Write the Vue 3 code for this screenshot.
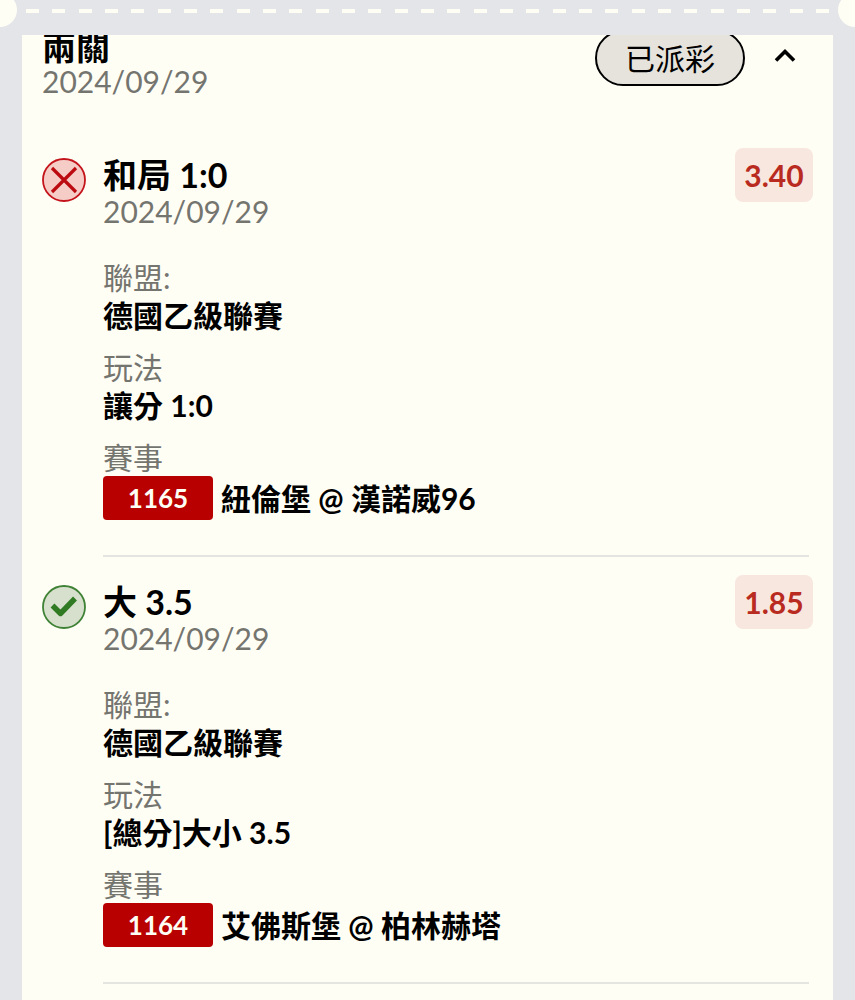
<script setup>
import { ref } from 'vue'

const open = ref(true)

const bets = [
    {
        id: 1165,
        won: false,
        pick: '和局 1:0',
        date: '2024/09/29',
        odds: '3.40',
        league: '德國乙級聯賽',
        play: '讓分 1:0',
        match: '紐倫堡 @ 漢諾威96',
    },
    {
        id: 1164,
        won: true,
        pick: '大 3.5',
        date: '2024/09/29',
        odds: '1.85',
        league: '德國乙級聯賽',
        play: '[總分]大小 3.5',
        match: '艾佛斯堡 @ 柏林赫塔',
    },
]
</script>

<template>
    <div class="page">
        <div class="tearLine">
            <span class="notch"></span>
            <div class="dashes">
                <span v-for="n in 31" :key="n" class="dash"></span>
            </div>
            <span class="notch"></span>
        </div>

        <main class="card">
            <header class="cardHeader">
                <div class="heading">
                    <h1>兩關</h1>
                    <p class="date">2024/09/29</p>
                </div>
                <span class="status">已派彩</span>
                <button class="toggle" aria-label="收合" :aria-expanded="open" v-on:click="open = !open">
                    <svg viewBox="0 0 24 16" width="24" height="16">
                        <path d="M3 12.5 L12 3.5 L21 12.5" fill="none" stroke="#000" stroke-width="3.6" />
                    </svg>
                </button>
            </header>

            <div v-if="open">
                <section v-for="bet in bets" :key="bet.id" class="bet">
                    <svg v-if="bet.won" class="result" viewBox="0 0 44 44">
                        <circle cx="22" cy="22" r="21" fill="#d6e0cc" stroke="#3f8235" stroke-width="1.8" />
                        <path d="M10.5 20.5 L18.5 28.5 L33 13.5" fill="none" stroke="#2f7a22" stroke-width="5.4" stroke-linejoin="round" />
                    </svg>
                    <svg v-else class="result" viewBox="0 0 44 44">
                        <circle cx="22" cy="22" r="21" fill="#f5cdc6" stroke="#c4141c" stroke-width="1.8" />
                        <path d="M10 10 L34 34 M34 10 L10 34" fill="none" stroke="#bb0a10" stroke-width="3.2" />
                    </svg>

                    <div class="betBody">
                        <h2>{{ bet.pick }}</h2>
                        <p class="date">{{ bet.date }}</p>
                        <dl>
                            <div>
                                <dt>聯盟:</dt>
                                <dd>{{ bet.league }}</dd>
                            </div>
                            <div>
                                <dt>玩法</dt>
                                <dd>{{ bet.play }}</dd>
                            </div>
                            <div>
                                <dt>賽事</dt>
                                <dd class="match">
                                    <span class="matchId">{{ bet.id }}</span>
                                    <span>{{ bet.match }}</span>
                                </dd>
                            </div>
                        </dl>
                    </div>

                    <span class="odds">{{ bet.odds }}</span>
                    <hr>
                </section>
            </div>
        </main>
    </div>
</template>

<style>
body {
    background-color: #e4e5e8;
}
</style>

<style scoped>
.page {
    height: 100vh;
    overflow: hidden;

    display: flex;
    flex-direction: column;

    background-color: #e4e5e8;
    color: #000;

    font-family: Lato, "Noto Sans CJK TC", sans-serif;
    font-size: 30px;
    line-height: 38px;
}

h1,
h2,
p,
dl,
dd {
    margin: 0;
}

.tearLine {
    flex: none;
    height: 42px;
    margin: -7px -17px 0;

    display: flex;
    align-items: flex-start;
}

.notch {
    flex: none;
    width: 34px;
    height: 34px;

    background-color: #fffef5;
    border-radius: 50%;
}

.dashes {
    flex: 1;
    height: 36px;
    padding: 0 9px;

    display: flex;
    align-items: center;
    justify-content: space-between;
}

.dash {
    width: 13px;
    height: 4px;
    background-color: #fffef5;
}

.card {
    flex: 1;
    min-height: 0;
    margin: 0 22px;
    padding: 0 20px;
    overflow: hidden;
    background-color: #fffef5;
}

/* scrolled slightly under the tear line */
.cardHeader {
    height: 100px;
    margin-top: -5px;

    display: flex;
    align-items: flex-start;
}

.heading {
    flex: 1;
}

h1 {
    font-size: 34px;
    line-height: 34px;
    font-weight: 700;
}

.date {
    color: #757570;
    line-height: 34px;
}

.status {
    box-sizing: border-box;
    height: 56px;
    padding: 0 28px;

    background-color: #e5e3db;
    border: 2px solid #000;
    border-radius: 28px;

    line-height: 52px;
}

.toggle {
    width: 56px;
    height: 52px;
    margin: 0 0 0 12px;
    padding: 0;

    display: flex;
    align-items: center;
    justify-content: center;

    background: none;
    border: none;
    cursor: pointer;
}

.bet {
    padding-top: 18px;

    display: grid;
    grid-template-columns: 44px 1fr auto;
    column-gap: 17px;
    align-items: start;
}

.result {
    width: 44px;
    height: 44px;
    margin-top: 10px;
}

.betBody {
    padding: 8px 0 35px;
}

h2 {
    font-size: 34px;
    line-height: 38px;
    font-weight: 700;
}

dl {
    margin-top: 30px;

    display: flex;
    flex-direction: column;
    gap: 14px;
}

dt {
    color: #757570;
}

dd {
    font-weight: 700;
}

.match {
    display: flex;
    align-items: center;
    gap: 8px;
}

.matchId {
    width: 110px;

    background-color: #b80000;
    color: #fffef5;
    border-radius: 4px;

    font-size: 26px;
    line-height: 44px;
    text-align: center;
}

.odds {
    width: 78px;

    background-color: #f8e7df;
    color: #b92b20;
    border-radius: 8px;

    font-weight: 700;
    line-height: 54px;
    text-align: center;
}

hr {
    grid-column: 2 / 4;
    justify-self: stretch;
    height: 2px;
    margin: 0 4px 0 0;
    border: none;
    background-color: #e4e4e0;
}
</style>
